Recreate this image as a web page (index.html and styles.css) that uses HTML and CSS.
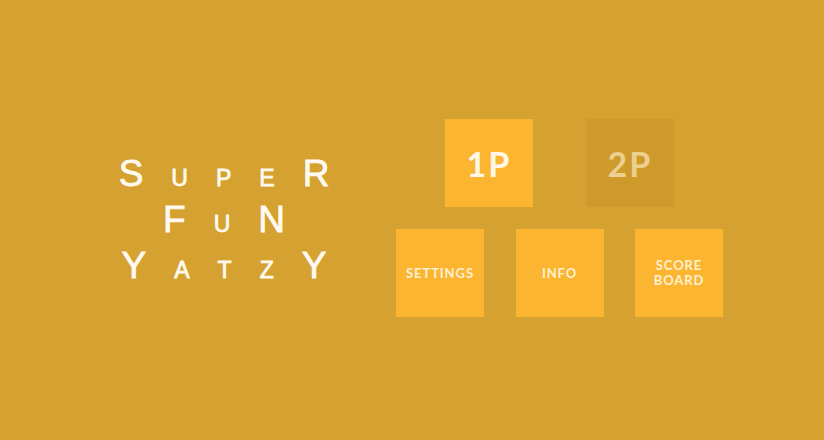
FILE: index.html
```html
<!DOCTYPE html>
<html>
<head>
<meta charset="utf-8">
<link rel="stylesheet" href="styles.css">
</head>
<body>
<main class="screen">
  <h1 class="title">
    <span class="line"><span class="big">S</span><span class="small">U</span><span class="small">P</span><span class="small">E</span><span class="big">R</span></span>
    <span class="line"><span class="big">F</span><span class="small">U</span><span class="big">N</span></span>
    <span class="line"><span class="big">Y</span><span class="small">A</span><span class="small">T</span><span class="small">Z</span><span class="big">Y</span></span>
  </h1>
  <nav class="menu">
    <div class="row row-top">
      <button class="tile tile-player">1P</button>
      <button class="tile tile-player tile-off">2P</button>
    </div>
    <div class="row row-bottom">
      <button class="tile tile-small">SETTINGS</button>
      <button class="tile tile-small">INFO</button>
      <button class="tile tile-small">SCORE<br>BOARD</button>
    </div>
  </nav>
</main>
</body>
</html>
```
FILE: styles.css
```css
html, body {
  margin: 0;
  padding: 0;
  background: #d5a131;
}
.screen {
  width: 824px;
  height: 440px;
  display: flex;
  align-items: center;
}
.title {
  width: 240px;
  margin: 0 0 0 104px;
  display: flex;
  flex-direction: column;
  align-items: center;
  font-family: "Liberation Sans", Arial, sans-serif;
  font-weight: normal;
  color: #fffaf0;
  -webkit-text-stroke: 0.8px #fffaf0;
}
.line {
  display: flex;
  align-items: baseline;
  gap: 28px;
  height: 46px;
  line-height: 46px;
}
.big {
  font-size: 37px;
  line-height: 46px;
}
.small {
  font-size: 23px;
  line-height: 1;
}
.menu {
  margin: -4px 0 0 52px;
  display: flex;
  flex-direction: column;
  align-items: center;
  gap: 22px;
}
.row {
  display: flex;
}
.row-top { gap: 53px; }
.row-bottom { gap: 31.5px; }
.tile {
  width: 88px;
  height: 88px;
  border: 0;
  padding: 0;
  margin: 0;
  background: #fbb531;
  display: flex;
  align-items: center;
  justify-content: center;
  font-family: Lato, "Open Sans", sans-serif;
  font-weight: bold;
  text-align: center;
}
.tile-player {
  font-size: 34px;
  letter-spacing: 2px;
  color: #fff7e8;
}
.tile-off {
  background: #cd9a2b;
  color: #edcf8e;
}
.tile-small {
  font-size: 13px;
  line-height: 15px;
  letter-spacing: 0.9px;
  color: #fff0d2;
}
```
